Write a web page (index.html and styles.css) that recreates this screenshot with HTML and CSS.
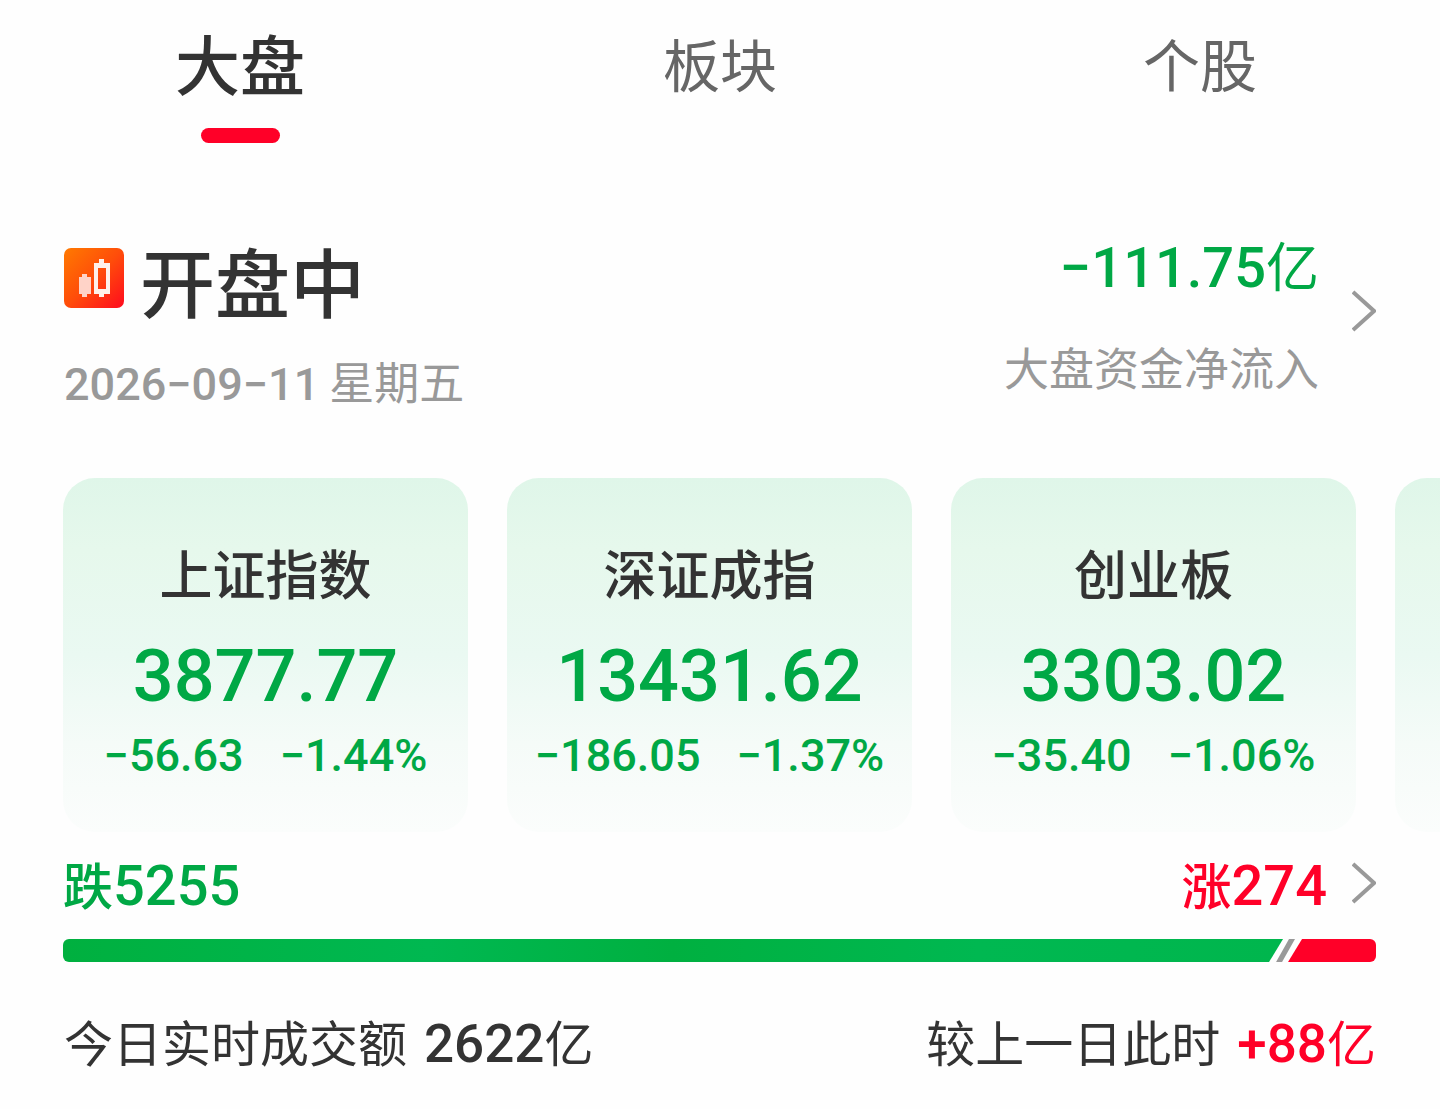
FILE: index.html
```
<!DOCTYPE html>
<html lang="zh-CN">
<head>
    <meta charset="UTF-8">
    <meta name="viewport" content="width=device-width, initial-scale=1.0">
    <title>大盘</title>
    <link rel="stylesheet" href="styles.css">
</head>
<body>
    <nav class="tabs">
        <button type="button" class="tab active">大盘</button>
        <button type="button" class="tab">板块</button>
        <button type="button" class="tab">个股</button>
    </nav>

    <header class="market">
        <div class="status">
            <h1 class="statusTitle">
                <svg class="statusIcon" viewBox="0 0 60 60" aria-hidden="true">
                    <defs>
                        <linearGradient id="iconFill" x1="0" y1="0" x2="1" y2="1">
                            <stop offset="0" stop-color="#ff7a00"/>
                            <stop offset="0.5" stop-color="#ff4d0a"/>
                            <stop offset="1" stop-color="#ff0a1e"/>
                        </linearGradient>
                    </defs>
                    <rect width="60" height="60" rx="7" fill="url(#iconFill)"/>
                    <path d="M15 29h3v-3h5v3h4v17h-4v3h-5v-3h-3z" fill="#ffd3c8"/>
                    <path d="M35 11h5v4h6v31h-6v3h-5v-3h-5V15h5zM34 20v21h8V20z" fill="#fff1ea" fill-rule="evenodd"/>
                </svg>
                开盘中
            </h1>
            <time class="date" datetime="2026-09-11"><b>2026−09−11</b> 星期五</time>
        </div>
        <a class="flow" href="#flow">
            <span class="flowText">
                <span class="flowAmount down"><b>−111.75</b>亿</span>
                <span class="flowLabel">大盘资金净流入</span>
            </span>
            <svg class="chevron" viewBox="0 0 24 42" aria-hidden="true"><path d="M1 2l21 19L1 40"/></svg>
        </a>
    </header>

    <section class="cards">
        <article class="card">
            <h2 class="cardName">上证指数</h2>
            <div class="cardValue"><b>3877.77</b></div>
            <div class="cardChange"><div><b>−56.63</b></div><div><b>−1.44%</b></div></div>
        </article>
        <article class="card">
            <h2 class="cardName">深证成指</h2>
            <div class="cardValue"><b>13431.62</b></div>
            <div class="cardChange"><div><b>−186.05</b></div><div><b>−1.37%</b></div></div>
        </article>
        <article class="card">
            <h2 class="cardName">创业板</h2>
            <div class="cardValue"><b>3303.02</b></div>
            <div class="cardChange"><div><b>−35.40</b></div><div><b>−1.06%</b></div></div>
        </article>
        <article class="card"></article>
    </section>

    <section class="breadth">
        <div class="breadthHead">
            <div class="count down">跌<b>5255</b></div>
            <a class="countLink" href="#breadth">
                <span class="count up">涨<b>274</b></span>
                <svg class="chevron" viewBox="0 0 24 42" aria-hidden="true"><path d="M1 2l21 19L1 40"/></svg>
            </a>
        </div>
        <div class="bar">
            <div class="barDown"></div>
            <div class="barSlash"></div>
            <div class="barUp" style="width: 6.7%"></div>
        </div>
    </section>

    <footer class="turnover">
        <div>今日实时成交额 <b>2622</b>亿</div>
        <div>较上一日此时 <span class="up"><b>+88</b>亿</span></div>
    </footer>
</body>
</html>
```
FILE: styles.css
```
* {
    margin: 0;
    padding: 0;
    box-sizing: border-box;
}
body {
    font-family: 'Noto Sans CJK SC', sans-serif;
    background-color: #fefefe;
    color: #333;
    overflow-x: hidden;
}
/* figures, kept from stretching the line they sit on */
b {
    font-family: Roboto, sans-serif;
    font-weight: 500;
    line-height: 0;
}
a {
    color: inherit;
    text-decoration: none;
}
.down { color: #00a845; }
.up { color: #ff0028; }

/* tabs */
.tabs {
    display: flex;
    padding-top: 22px;
}
.tab {
    flex: 1;
    display: flex;
    flex-direction: column;
    align-items: center;
    gap: 26px;
    border: none;
    background: none;
    font-family: inherit;
    font-size: 57px;
    line-height: 80px;
    color: #666;
    cursor: pointer;
}
.tab::after {
    content: '';
    width: 79px;
    height: 15px;
    border-radius: 8px;
}
.tab.active {
    font-size: 65px;
    font-weight: 500;
    color: #333;
}
.tab.active::after {
    background-color: #ff0028;
}

/* market status */
.market {
    display: flex;
    justify-content: space-between;
    align-items: flex-start;
    padding: 81px 64px 0;
}
.status {
    padding-top: 16px;
}
.statusTitle {
    display: flex;
    gap: 16px;
    font-size: 75px;
    font-weight: 500;
    line-height: 80px;
    margin-bottom: 31px;
}
.statusIcon {
    width: 60px;
    height: 60px;
    margin-top: 8px;
}
.date {
    display: block;
    font-size: 45px;
    line-height: 60px;
    color: #999;
}
.flow {
    display: flex;
    align-items: center;
    gap: 33px;
}
.flowText {
    display: flex;
    flex-direction: column;
    align-items: flex-end;
    gap: 33px;
}
.flowAmount {
    font-size: 53px;
    line-height: 80px;
}
.flowAmount b {
    font-size: 56px;
}
.flowLabel {
    font-size: 45px;
    line-height: 60px;
    color: #999;
}
.chevron {
    width: 24px;
    height: 42px;
    fill: none;
    stroke: #999;
    stroke-width: 4;
}

/* index cards, the fourth one peeks in from the right */
.cards {
    display: flex;
    gap: 39px;
    padding: 67px 0 0 63px;
    overflow: hidden;
}
.card {
    flex: 0 0 calc((100% - 162px) / 3);
    padding: 64px 0 50px;
    border-radius: 32px;
    background: linear-gradient(#dff6e9, #e6f8ec 20%, #eaf9f2 50%, #f5fbf8 75%, #fbfdfc);
    text-align: center;
    color: #00a845;
}
.cardName {
    font-size: 53px;
    font-weight: 500;
    line-height: 60px;
    color: #333;
    margin-bottom: 28px;
}
.cardValue {
    font-size: 72px;
    line-height: 80px;
    margin-bottom: 12px;
}
.cardChange {
    display: flex;
    justify-content: center;
    gap: 36px;
    font-size: 45px;
    line-height: 60px;
}

/* falling / rising counts */
.breadth {
    padding: 11px 64px 0 63px;
}
.breadthHead {
    display: flex;
    justify-content: space-between;
    margin-bottom: 16px;
}
.count {
    font-size: 50px;
    font-weight: 500;
    line-height: 80px;
}
.count b {
    font-size: 56px;
}
.countLink {
    display: flex;
    align-items: center;
    gap: 25px;
}
.bar {
    display: flex;
    height: 23px;
    border-radius: 6px;
    overflow: hidden;
}
.barDown {
    flex: 1;
    background: linear-gradient(90deg, #00b03f, #00b851 30%, #00b040 50%, #00b851 75%, #00b64d);
    clip-path: polygon(0 0, 100% 0, calc(100% - 14px) 100%, 0 100%);
}
.barSlash {
    width: 19px;
    margin: 0 -7px;
    background-color: #999;
    clip-path: polygon(13px 0, 100% 0, 6px 100%, 0 100%);
}
.barUp {
    background-color: #ff0028;
    clip-path: polygon(14px 0, 100% 0, 100% 100%, 0 100%);
}

/* turnover */
.turnover {
    display: flex;
    justify-content: space-between;
    padding: 39px 64px 28px;
    font-size: 49px;
    line-height: 80px;
}
.turnover b {
    font-size: 53px;
    margin-left: 6px;
}
```
